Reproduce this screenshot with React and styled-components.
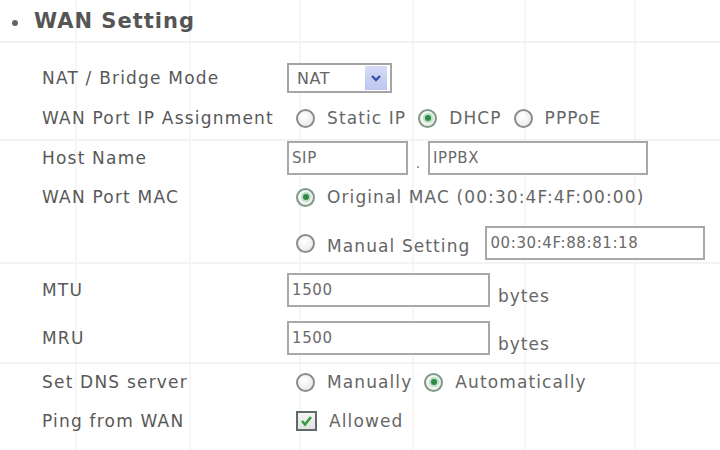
import React from "react";
import styled, { createGlobalStyle } from "styled-components";

const GlobalStyle = createGlobalStyle`
  html, body {
    margin: 0;
    padding: 0;
    background: #fff;
  }
  body {
    font-family: "DejaVu Sans", Verdana, sans-serif;
    color: #5a5a5a;
  }
`;

// faint table lines that show through the scanned page
const Page = styled.div`
  width: 720px;
  height: 450px;
  overflow: hidden;
  background-color: #fff;
  background-image:
    linear-gradient(to bottom, transparent 41px, #f2f2f2 41px, #f2f2f2 43px, transparent 43px),
    linear-gradient(to bottom, transparent 139px, #f3f3f3 139px, #f3f3f3 141px, transparent 141px),
    linear-gradient(to bottom, transparent 262px, #f4f4f4 262px, #f4f4f4 264px, transparent 264px),
    linear-gradient(to bottom, transparent 362px, #f3f3f3 362px, #f3f3f3 364px, transparent 364px),
    linear-gradient(to right, transparent 75px, #f6f6f6 75px, #f6f6f6 77px, transparent 77px),
    linear-gradient(to right, transparent 189px, #f6f6f6 189px, #f6f6f6 191px, transparent 191px),
    linear-gradient(to right, transparent 299px, #f6f6f6 299px, #f6f6f6 301px, transparent 301px),
    linear-gradient(to right, transparent 412px, #f6f6f6 412px, #f6f6f6 414px, transparent 414px),
    linear-gradient(to right, transparent 524px, #f6f6f6 524px, #f6f6f6 526px, transparent 526px),
    linear-gradient(to right, transparent 634px, #f6f6f6 634px, #f6f6f6 636px, transparent 636px);
`;

const Title = styled.h2`
  display: flex;
  align-items: center;
  gap: 16px;
  height: 42px;
  margin: 0;
  padding-left: 12px;
  font-size: 21px;
  font-weight: bold;
  color: #555;
  letter-spacing: 1px;
`;

const Bullet = styled.span`
  width: 6px;
  height: 6px;
  border-radius: 50%;
  background: #666;
  margin-top: 4px;
`;

const Form = styled.div`
  padding: 16px 0 0 42px;
`;

const Row = styled.div`
  display: grid;
  grid-template-columns: 245px auto;
  align-items: center;
  height: ${(p) => p.h}px;
`;

const Label = styled.div`
  font-size: 17px;
  letter-spacing: 1.2px;
  color: #585858;
  white-space: nowrap;
`;

const Controls = styled.div`
  display: flex;
  align-items: center;
  padding-left: ${(p) => (p.indent ? 9 : 0)}px;
`;

const Option = styled.label`
  display: flex;
  align-items: center;
  gap: 12px;
  margin-right: 12px;
  font-size: 17px;
  letter-spacing: 1.1px;
  color: #666;
  white-space: nowrap;
`;

const OptionText = styled.span`
  margin-top: ${(p) => p.drop || 0}px;
`;

const Radio = styled.span`
  position: relative;
  flex: none;
  width: 15px;
  height: 15px;
  border-radius: 50%;
  border: 2px solid ${(p) => (p.checked ? "#7f9a86" : "#8c8c8c")};
  background: radial-gradient(circle at 40% 35%, #fff, #e6e6e6);

  &::after {
    content: "";
    display: ${(p) => (p.checked ? "block" : "none")};
    position: absolute;
    left: 50%;
    top: 50%;
    width: 6px;
    height: 6px;
    margin: -3px 0 0 -3px;
    border-radius: 50%;
    background: #2f8a48;
    box-shadow: 0 0 0 2px #b9e0c2;
  }
`;

const Select = styled.div`
  display: flex;
  align-items: center;
  justify-content: space-between;
  box-sizing: border-box;
  width: 105px;
  height: 30px;
  padding: 0 3px 0 8px;
  border: 2px solid #a4a4a4;
  background: #fff;
  font-size: 16px;
  letter-spacing: 0.6px;
  color: #666;
`;

const DropButton = styled.span`
  display: flex;
  align-items: center;
  justify-content: center;
  width: 22px;
  height: 24px;
  background: linear-gradient(#d6dcf6, #bcc6ee);
`;

const TextBox = styled.div`
  display: flex;
  align-items: center;
  box-sizing: border-box;
  width: ${(p) => p.w}px;
  height: 34px;
  padding-left: 3px;
  margin-left: ${(p) => p.ml || 0}px;
  border: 2px solid #a8a8a8;
  background: #fff;
  font-size: 15px;
  letter-spacing: 0.6px;
  color: #6a6a6a;
`;

const Dot = styled.span`
  align-self: flex-end;
  width: 20px;
  padding-bottom: 4px;
  text-align: center;
  font-size: 14px;
  color: #777;
`;

const Unit = styled.span`
  margin: 12px 0 0 8px;
  font-size: 17px;
  letter-spacing: 1px;
  color: #666;
`;

const CheckBox = styled.span`
  display: flex;
  align-items: center;
  justify-content: center;
  flex: none;
  box-sizing: border-box;
  width: 21px;
  height: 20px;
  border: 2px solid #5e6b6b;
  background: linear-gradient(#f4f4f4, #e2e2e2);
`;

const Chevron = () => (
  <svg width="12" height="10" viewBox="0 0 12 10">
    <polyline points="2,3 6,7 10,3" fill="none" stroke="#3353a8" strokeWidth="2.4" />
  </svg>
);

const Tick = () => (
  <svg width="13" height="12" viewBox="0 0 13 12">
    <polyline points="2,6 5,9.5 11,2" fill="none" stroke="#33a040" strokeWidth="2.6" />
  </svg>
);

const RadioOption = ({ checked, children, drop }) => (
  <Option>
    <Radio checked={checked} />
    <OptionText drop={drop}>{children}</OptionText>
  </Option>
);

export default function App() {
  return (
    <Page>
      <GlobalStyle />
      <Title>
        <Bullet />
        WAN Setting
      </Title>
      <Form>
        <Row h={40}>
          <Label>NAT / Bridge Mode</Label>
          <Controls>
            <Select>
              NAT
              <DropButton>
                <Chevron />
              </DropButton>
            </Select>
          </Controls>
        </Row>
        <Row h={40}>
          <Label>WAN Port IP Assignment</Label>
          <Controls indent>
            <RadioOption>Static IP</RadioOption>
            <RadioOption checked>DHCP</RadioOption>
            <RadioOption>PPPoE</RadioOption>
          </Controls>
        </Row>
        <Row h={40}>
          <Label>Host Name</Label>
          <Controls>
            <TextBox w={121}>SIP</TextBox>
            <Dot>.</Dot>
            <TextBox w={220}>IPPBX</TextBox>
          </Controls>
        </Row>
        <Row h={38}>
          <Label>WAN Port MAC</Label>
          <Controls indent>
            <RadioOption checked>Original MAC (00:30:4F:4F:00:00)</RadioOption>
          </Controls>
        </Row>
        <Row h={54}>
          <Label />
          <Controls indent>
            <RadioOption drop={6}>Manual Setting</RadioOption>
            <TextBox w={220} ml={3}>00:30:4F:88:81:18</TextBox>
          </Controls>
        </Row>
        <Row h={40}>
          <Label>MTU</Label>
          <Controls>
            <TextBox w={203}>1500</TextBox>
            <Unit>bytes</Unit>
          </Controls>
        </Row>
        <Row h={56}>
          <Label>MRU</Label>
          <Controls>
            <TextBox w={203}>1500</TextBox>
            <Unit>bytes</Unit>
          </Controls>
        </Row>
        <Row h={32}>
          <Label>Set DNS server</Label>
          <Controls indent>
            <RadioOption>Manually</RadioOption>
            <RadioOption checked>Automatically</RadioOption>
          </Controls>
        </Row>
        <Row h={46}>
          <Label>Ping from WAN</Label>
          <Controls indent>
            <Option>
              <CheckBox>
                <Tick />
              </CheckBox>
              Allowed
            </Option>
          </Controls>
        </Row>
      </Form>
    </Page>
  );
}
